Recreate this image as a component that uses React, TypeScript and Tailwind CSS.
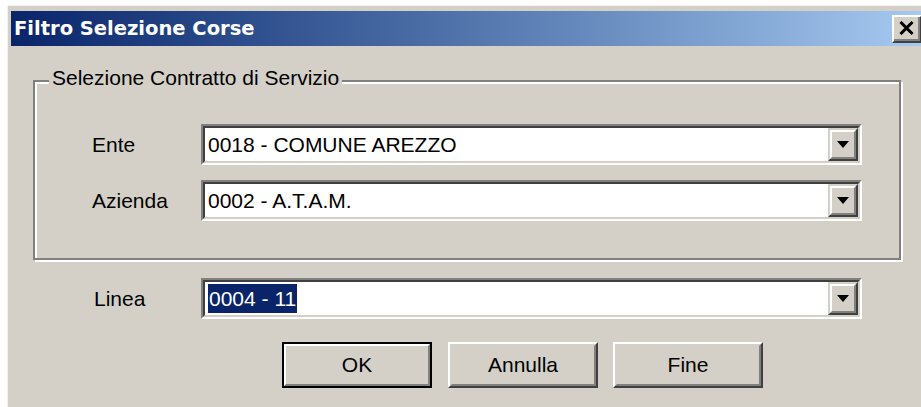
import React from 'react';

// Classic 3D borders: sunken field and raised button faces
function Combo({ value, selected = false }: { value: string; selected?: boolean }) {
    return (
        <div className="h-[41px] w-[661px] border-2 border-t-[#808080] border-l-[#808080] border-b-white border-r-white">
            <div className="flex h-full border-2 border-t-[#404040] border-l-[#404040] border-b-[#d4d0c8] border-r-[#d4d0c8] bg-white">
                <div className="flex flex-1 items-center pl-[3px] text-[21px] leading-[24px] text-black">
                    {selected ? (
                        <span className="inline-block h-[29px] bg-[#0a246a] px-[1px] leading-[29px] text-white">{value}</span>
                    ) : (
                        <span>{value}</span>
                    )}
                </div>
                <DropButton />
            </div>
        </div>
    );
}

function DropButton() {
    return (
        <div className="w-[30px] border-2 border-t-[#d4d0c8] border-l-[#d4d0c8] border-b-[#404040] border-r-[#404040] bg-[#d4d0c8]">
            <div className="flex h-full items-center justify-center border-2 border-t-white border-l-white border-b-[#808080] border-r-[#808080]">
                <svg width="12" height="7" viewBox="0 0 12 7">
                    <polygon points="0,0 12,0 6,7" fill="#000" />
                </svg>
            </div>
        </div>
    );
}

function PushButton({ label, isDefault = false }: { label: string; isDefault?: boolean }) {
    if (isDefault) {
        return (
            <div className="h-[46px] w-[150px] border-2 border-black">
                <div className="flex h-full items-center justify-center border-2 border-t-white border-l-white border-b-[#808080] border-r-[#808080] bg-[#d4d0c8] text-[21px] text-black">
                    {label}
                </div>
            </div>
        );
    }
    return (
        <div className="h-[46px] w-[150px] border-2 border-t-white border-l-white border-b-[#404040] border-r-[#404040]">
            <div className="flex h-full items-center justify-center border-2 border-t-[#d4d0c8] border-l-[#d4d0c8] border-b-[#808080] border-r-[#808080] bg-[#d4d0c8] text-[21px] text-black">
                {label}
            </div>
        </div>
    );
}

export default function App() {
    return (
        <div className="h-[407px] w-[921px] overflow-hidden bg-white pl-[7px] pt-[5px] font-['Liberation_Sans',Arial,sans-serif]">
            <div className="h-[410px] w-[930px] border-l border-t border-[#f4f3ef] bg-[#d4d0c8] pl-[3px] pt-[5px]">
                {/* title bar */}
                <div className="flex h-[35px] w-[914px] items-center justify-between bg-linear-to-r from-[#0a246a] to-[#a6caf0] pl-[3px] pr-[3px]">
                    <span className="font-['DejaVu_Sans',sans-serif] text-[19.5px] font-bold text-white">Filtro Selezione Corse</span>
                    <div className="h-[28px] w-[30px] border-2 border-t-white border-l-white border-b-[#404040] border-r-[#404040] bg-[#d4d0c8]">
                        <div className="flex h-full items-center justify-center border-b-2 border-r-2 border-[#808080]">
                            <svg width="15" height="14" viewBox="0 0 15 14">
                                <path d="M1.5 1 L13.5 13 M13.5 1 L1.5 13" stroke="#000" strokeWidth="3" />
                            </svg>
                        </div>
                    </div>
                </div>

                {/* Selezione Contratto di Servizio */}
                <div className="relative ml-[22px] mt-[34px] h-[180px] w-[868px] border-2 border-[#808080] shadow-[inset_2px_2px_0_#fff,2px_2px_0_#fff]">
                    <span className="absolute left-[14px] top-[-16px] bg-[#d4d0c8] px-[3px] text-[21px] leading-[24px] text-black">
                        Selezione Contratto di Servizio
                    </span>
                    <div className="grid grid-cols-[109px_661px] items-center gap-y-[15px] pl-[57px] pt-[42px]">
                        <span className="text-[21px] text-black">Ente</span>
                        <Combo value="0018 - COMUNE AREZZO" />
                        <span className="text-[21px] text-black">Azienda</span>
                        <Combo value="0002 - A.T.A.M." />
                    </div>
                </div>

                <div className="ml-[83px] mt-[18px] flex items-center">
                    <span className="w-[107px] text-[21px] text-black">Linea</span>
                    <Combo value="0004 - 11" selected />
                </div>

                <div className="ml-[271px] mt-[23px] flex">
                    <PushButton label="OK" isDefault />
                    <div className="ml-[16px]">
                        <PushButton label="Annulla" />
                    </div>
                    <div className="ml-[15px]">
                        <PushButton label="Fine" />
                    </div>
                </div>
            </div>
        </div>
    );
}
